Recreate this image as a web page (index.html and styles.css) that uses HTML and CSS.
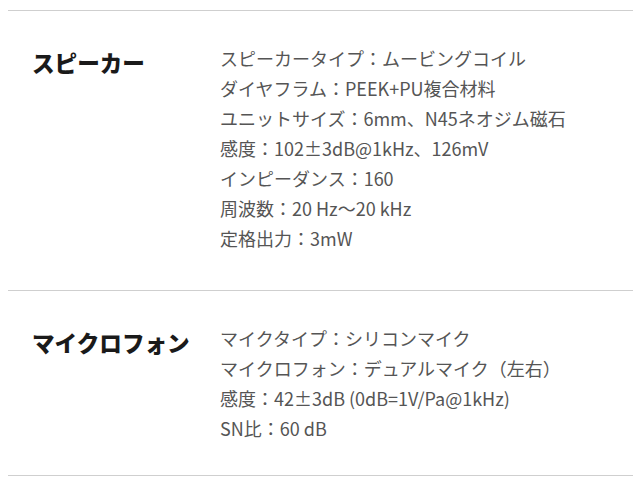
FILE: index.html
```html
<!DOCTYPE html>
<html lang="ja">
<head>
<meta charset="utf-8">
<link rel="stylesheet" href="styles.css">
</head>
<body>
<div class="specs">
  <section class="spec spec-first">
    <h2 class="spec-title">スピーカー</h2>
    <ul class="spec-list">
      <li>スピーカータイプ：ムービングコイル</li>
      <li>ダイヤフラム：PEEK+PU複合材料</li>
      <li>ユニットサイズ：6mm、N45ネオジム磁石</li>
      <li>感度：102<span class="fw">±</span>3dB@1kHz、126mV</li>
      <li>インピーダンス：160</li>
      <li>周波数：20 Hz～20 kHz</li>
      <li>定格出力：3mW</li>
    </ul>
  </section>
  <section class="spec">
    <h2 class="spec-title">マイクロフォン</h2>
    <ul class="spec-list">
      <li>マイクタイプ：シリコンマイク</li>
      <li>マイクロフォン：デュアルマイク（左右）</li>
      <li>感度：42<span class="fw">±</span>3dB (0dB=1V/Pa@1kHz)</li>
      <li>SN比：60 dB</li>
    </ul>
  </section>
</div>
</body>
</html>
```
FILE: styles.css
```css
html, body {
  margin: 0;
  padding: 0;
  background: #fff;
}
body {
  padding: 10px 7px 0 8px;
  font-family: "Noto Sans CJK JP", "Noto Sans", sans-serif;
}
.specs {
  border-top: 1px solid #cfcfcf;
}
.spec {
  display: grid;
  grid-template-columns: 188px 1fr;
  padding: 32px 24px 32px;
  border-bottom: 1px solid #cfcfcf;
}
.spec-first {
  padding-top: 32px;
  padding-bottom: 37px;
}
.spec-title {
  margin: 5px 0 0;
  font-size: 22.6px;
  line-height: 30px;
  font-weight: 900;
  color: #1a1a1a;
}
.spec-list {
  list-style: none;
  margin: 0;
  padding: 0;
  font-size: 18px;
  line-height: 30px;
  color: #555;
}
.fw {
  font-feature-settings: "fwid";
}
```
